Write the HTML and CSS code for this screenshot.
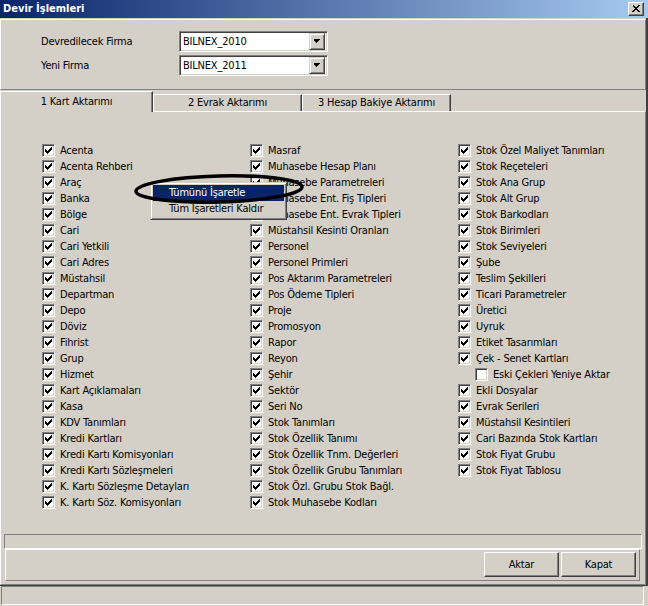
FILE: index.html
```html
<!DOCTYPE html>
<html lang="tr">
<head>
<meta charset="utf-8">
<title>Devir İşlemleri</title>
<link rel="stylesheet" href="styles.css">
</head>
<body>
<div class="window">
  <div class="titlebar">
    <span class="title">Devir İşlemleri</span>
    <span class="close"></span>
  </div>
  <div class="main">
    <div class="top-panel">
      <div class="field">
        <span class="field-label">Devredilecek Firma</span>
        <div class="combo"><span class="combo-text">BILNEX_2010</span><span class="combo-btn"></span></div>
      </div>
      <div class="field">
        <span class="field-label">Yeni Firma</span>
        <div class="combo"><span class="combo-text">BILNEX_2011</span><span class="combo-btn"></span></div>
      </div>
    </div>
    <div class="tabs">
      <div class="tab active tab1">1 Kart Aktarımı</div>
      <div class="tab tab2">2 Evrak Aktarımı</div>
      <div class="tab tab3">3 Hesap Bakiye Aktarımı</div>
    </div>
    <div class="page">
      <div class="columns">
        <div class="col">
          <div class="row"><span class="cb on"></span>Acenta</div>
          <div class="row"><span class="cb on"></span>Acenta Rehberi</div>
          <div class="row"><span class="cb on"></span>Araç</div>
          <div class="row"><span class="cb on"></span>Banka</div>
          <div class="row"><span class="cb on"></span>Bölge</div>
          <div class="row"><span class="cb on"></span>Cari</div>
          <div class="row"><span class="cb on"></span>Cari Yetkili</div>
          <div class="row"><span class="cb on"></span>Cari Adres</div>
          <div class="row"><span class="cb on"></span>Müstahsil</div>
          <div class="row"><span class="cb on"></span>Departman</div>
          <div class="row"><span class="cb on"></span>Depo</div>
          <div class="row"><span class="cb on"></span>Döviz</div>
          <div class="row"><span class="cb on"></span>Fihrist</div>
          <div class="row"><span class="cb on"></span>Grup</div>
          <div class="row"><span class="cb on"></span>Hizmet</div>
          <div class="row"><span class="cb on"></span>Kart Açıklamaları</div>
          <div class="row"><span class="cb on"></span>Kasa</div>
          <div class="row"><span class="cb on"></span>KDV Tanımları</div>
          <div class="row"><span class="cb on"></span>Kredi Kartları</div>
          <div class="row"><span class="cb on"></span>Kredi Kartı Komisyonları</div>
          <div class="row"><span class="cb on"></span>Kredi Kartı Sözleşmeleri</div>
          <div class="row"><span class="cb on"></span>K. Kartı Sözleşme Detayları</div>
          <div class="row"><span class="cb on"></span>K. Kartı Söz. Komisyonları</div>
        </div>
        <div class="col">
          <div class="row"><span class="cb on"></span>Masraf</div>
          <div class="row"><span class="cb on"></span>Muhasebe Hesap Planı</div>
          <div class="row"><span class="cb on"></span>Muhasebe Parametreleri</div>
          <div class="row"><span class="cb on"></span>Muhasebe Ent. Fiş Tipleri</div>
          <div class="row"><span class="cb on"></span>Muhasebe Ent. Evrak Tipleri</div>
          <div class="row"><span class="cb on"></span>Müstahsil Kesinti Oranları</div>
          <div class="row"><span class="cb on"></span>Personel</div>
          <div class="row"><span class="cb on"></span>Personel Primleri</div>
          <div class="row"><span class="cb on"></span>Pos Aktarım Parametreleri</div>
          <div class="row"><span class="cb on"></span>Pos Ödeme Tipleri</div>
          <div class="row"><span class="cb on"></span>Proje</div>
          <div class="row"><span class="cb on"></span>Promosyon</div>
          <div class="row"><span class="cb on"></span>Rapor</div>
          <div class="row"><span class="cb on"></span>Reyon</div>
          <div class="row"><span class="cb on"></span>Şehir</div>
          <div class="row"><span class="cb on"></span>Sektör</div>
          <div class="row"><span class="cb on"></span>Seri No</div>
          <div class="row"><span class="cb on"></span>Stok Tanımları</div>
          <div class="row"><span class="cb on"></span>Stok Özellik Tanımı</div>
          <div class="row"><span class="cb on"></span>Stok Özellik Tnm. Değerleri</div>
          <div class="row"><span class="cb on"></span>Stok Özellik Grubu Tanımları</div>
          <div class="row"><span class="cb on"></span>Stok Özl. Grubu Stok Bağl.</div>
          <div class="row"><span class="cb on"></span>Stok Muhasebe Kodları</div>
        </div>
        <div class="col">
          <div class="row"><span class="cb on"></span>Stok Özel Maliyet Tanımları</div>
          <div class="row"><span class="cb on"></span>Stok Reçeteleri</div>
          <div class="row"><span class="cb on"></span>Stok Ana Grup</div>
          <div class="row"><span class="cb on"></span>Stok Alt Grup</div>
          <div class="row"><span class="cb on"></span>Stok Barkodları</div>
          <div class="row"><span class="cb on"></span>Stok Birimleri</div>
          <div class="row"><span class="cb on"></span>Stok Seviyeleri</div>
          <div class="row"><span class="cb on"></span>Şube</div>
          <div class="row"><span class="cb on"></span>Teslim Şekilleri</div>
          <div class="row"><span class="cb on"></span>Ticari Parametreler</div>
          <div class="row"><span class="cb on"></span>Üretici</div>
          <div class="row"><span class="cb on"></span>Uyruk</div>
          <div class="row"><span class="cb on"></span>Etiket Tasarımları</div>
          <div class="row"><span class="cb on"></span>Çek - Senet Kartları</div>
          <div class="row sub"><span class="cb"></span>Eski Çekleri Yeniye Aktar</div>
          <div class="row"><span class="cb on"></span>Ekli Dosyalar</div>
          <div class="row"><span class="cb on"></span>Evrak Serileri</div>
          <div class="row"><span class="cb on"></span>Müstahsil Kesintileri</div>
          <div class="row"><span class="cb on"></span>Cari Bazında Stok Kartları</div>
          <div class="row"><span class="cb on"></span>Stok Fiyat Grubu</div>
          <div class="row"><span class="cb on"></span>Stok Fiyat Tablosu</div>
        </div>
      </div>
      <div class="sunken"></div>
      <div class="button-panel">
        <button class="btn">Aktar</button>
        <button class="btn">Kapat</button>
      </div>
    </div>
  </div>
  <div class="statusbar"></div>

  <div class="menu">
    <div class="menu-item selected">Tümünü İşaretle</div>
    <div class="menu-item">Tüm İşaretleri Kaldır</div>
  </div>
  <svg class="ellipse" width="180" height="44" viewBox="0 0 180 44">
    <ellipse cx="89" cy="21" rx="83" ry="13" fill="none" stroke="#000" stroke-width="3.5" transform="rotate(-1.5 89 21)"/>
  </svg>
</div>
</body>
</html>
```
FILE: styles.css
```css
* { box-sizing: border-box; }
html, body { margin: 0; padding: 0; }
body {
  width: 648px;
  height: 606px;
  overflow: hidden;
  background: #d4d0c8;
  font-family: "DejaVu Sans Condensed", "DejaVu Sans", sans-serif;
  font-size: 11px;
  letter-spacing: -0.2px;
  color: #000;
}
.window {
  position: relative;
  width: 648px;
  height: 606px;
  background: #d4d0c8;
}

/* title bar */
.titlebar {
  height: 18px;
  display: flex;
  align-items: center;
  justify-content: space-between;
  padding: 0 4px 0 3px;
  background: linear-gradient(to right, #0a246a, #a6caf0);
}
.title {
  color: #fff;
  font-weight: bold;
  font-size: 11px;
  letter-spacing: 0;
  line-height: 18px;
}
.close {
  position: relative;
  width: 16px;
  height: 14px;
  background: #d4d0c8;
  border: 1px solid;
  border-color: #fff #404040 #404040 #fff;
  box-shadow: inset -1px -1px #808080;
}
.close::after {
  content: "";
  position: absolute;
  left: 3px;
  top: 2px;
  width: 1px;
  height: 1px;
  box-shadow:
    0 0 #000, 1px 0 #000, 6px 0 #000, 7px 0 #000,
    1px 1px #000, 2px 1px #000, 5px 1px #000, 6px 1px #000,
    2px 2px #000, 3px 2px #000, 4px 2px #000, 5px 2px #000,
    3px 3px #000, 4px 3px #000,
    2px 4px #000, 3px 4px #000, 4px 4px #000, 5px 4px #000,
    1px 5px #000, 2px 5px #000, 5px 5px #000, 6px 5px #000,
    0 6px #000, 1px 6px #000, 6px 6px #000, 7px 6px #000;
}

/* main area */
.main {
  height: 568px;
  padding-top: 1px;
  border-right: 2px solid #404040;
  border-bottom: 1px solid #404040;
  display: flex;
  flex-direction: column;
}
.top-panel {
  height: 71px;
  flex-shrink: 0;
  border: 1px solid;
  border-color: #fff #808080 #808080 #fff;
  padding: 11px 0 0 40px;
  margin-bottom: 1px;
  display: flex;
  flex-direction: column;
  gap: 3px;
}
.field {
  display: flex;
  align-items: center;
}
.field-label {
  width: 138px;
}
.combo {
  width: 149px;
  height: 21px;
  background: #fff;
  border: 1px solid;
  border-color: #808080 #fff #fff #808080;
  box-shadow: inset 1px 1px #404040, inset -1px -1px #d4d0c8;
  display: flex;
  align-items: center;
  justify-content: space-between;
  padding: 2px 2px 2px 3px;
}
.combo-text {
  line-height: 15px;
}
.combo-btn {
  position: relative;
  width: 16px;
  height: 17px;
  background: #d4d0c8;
  border: 1px solid;
  border-color: #d4d0c8 #404040 #404040 #d4d0c8;
  box-shadow: inset 1px 1px #fff, inset -1px -1px #808080;
}
.combo-btn::after {
  content: "";
  position: absolute;
  left: 3px;
  top: 5px;
  width: 1px;
  height: 1px;
  box-shadow:
    0 0 #000, 1px 0 #000, 2px 0 #000, 3px 0 #000, 4px 0 #000, 5px 0 #000, 6px 0 #000,
    1px 1px #000, 2px 1px #000, 3px 1px #000, 4px 1px #000, 5px 1px #000,
    2px 2px #000, 3px 2px #000, 4px 2px #000,
    3px 3px #000;
}

/* tabs */
.tabs {
  height: 20px;
  flex-shrink: 0;
  display: flex;
  align-items: flex-end;
  position: relative;
  z-index: 1;
}
.tab {
  height: 17px;
  border: 1px solid;
  border-bottom: none;
  border-color: #fff #404040 transparent #fff;
  box-shadow: inset -1px 0 #808080;
  background: #d4d0c8;
  text-align: center;
  line-height: 16px;
  white-space: nowrap;
}
.tab.active {
  height: 21px;
  margin-bottom: -1px;
  line-height: 19px;
}
.tab1 { width: 153px; }
.tab2 { width: 149px; }
.tab3 { width: 149px; }

/* tab page */
.page {
  height: 474px;
  flex-shrink: 0;
  border: 1px solid;
  border-color: #fff #808080 #808080 #fff;
  padding: 31px 0 3px 0;
  display: flex;
  flex-direction: column;
}
.columns {
  flex: 1;
  display: grid;
  grid-template-columns: 208px 208px 208px;
  align-content: start;
  padding-left: 41px;
}
.col {
  display: flex;
  flex-direction: column;
}
.row {
  height: 16px;
  display: flex;
  align-items: flex-start;
  line-height: 16px;
  white-space: nowrap;
}
.row.sub {
  padding-left: 17px;
}
.cb {
  position: relative;
  flex-shrink: 0;
  width: 13px;
  height: 13px;
  margin-top: 1px;
  margin-right: 5px;
  background: #fff;
  border: 1px solid;
  border-color: #808080 #fff #fff #808080;
  box-shadow: inset 1px 1px #404040, inset -1px -1px #d4d0c8;
}
.cb.on::after {
  content: "";
  position: absolute;
  left: 2px;
  top: 2px;
  width: 1px;
  height: 1px;
  box-shadow:
    6px 0 #000,
    5px 1px #000, 6px 1px #000,
    0 2px #000, 4px 2px #000, 5px 2px #000, 6px 2px #000,
    0 3px #000, 1px 3px #000, 3px 3px #000, 4px 3px #000, 5px 3px #000,
    0 4px #000, 1px 4px #000, 2px 4px #000, 3px 4px #000, 4px 4px #000,
    1px 5px #000, 2px 5px #000, 3px 5px #000,
    2px 6px #000;
}
.sunken {
  height: 15px;
  flex-shrink: 0;
  margin: 0 3px;
  border: 1px solid;
  border-color: #808080 #fff #fff #808080;
}
.button-panel {
  height: 32px;
  flex-shrink: 0;
  margin: 0 5px 0 4px;
  border: 1px solid;
  border-color: #fff #808080 #808080 #fff;
  display: flex;
  justify-content: flex-end;
  gap: 2px;
  padding: 2px 3px 0 0;
}
.btn {
  width: 75px;
  height: 25px;
  margin: 0;
  padding: 0;
  background: #d4d0c8;
  border: 1px solid;
  border-color: #fff #404040 #404040 #fff;
  box-shadow: inset -1px -1px #808080;
  font: inherit;
  letter-spacing: inherit;
  color: #000;
}

/* status bar */
.statusbar {
  margin-left: 1px;
  width: 643px;
  height: 19px;
  border: 1px solid;
  border-color: #808080 #fff #fff #808080;
}

/* popup menu */
.menu {
  position: absolute;
  left: 150px;
  top: 182px;
  width: 137px;
  height: 38px;
  background: #d4d0c8;
  border: 1px solid;
  border-color: #d4d0c8 #404040 #404040 #d4d0c8;
  box-shadow: inset 1px 1px #fff, inset -1px -1px #808080;
  padding: 2px;
  z-index: 5;
}
.menu-item {
  height: 16px;
  line-height: 16px;
  padding-left: 16px;
  white-space: nowrap;
}
.menu-item.selected {
  background: #0a246a;
  color: #fff;
}
.ellipse {
  position: absolute;
  left: 130px;
  top: 168px;
  z-index: 6;
}
```
